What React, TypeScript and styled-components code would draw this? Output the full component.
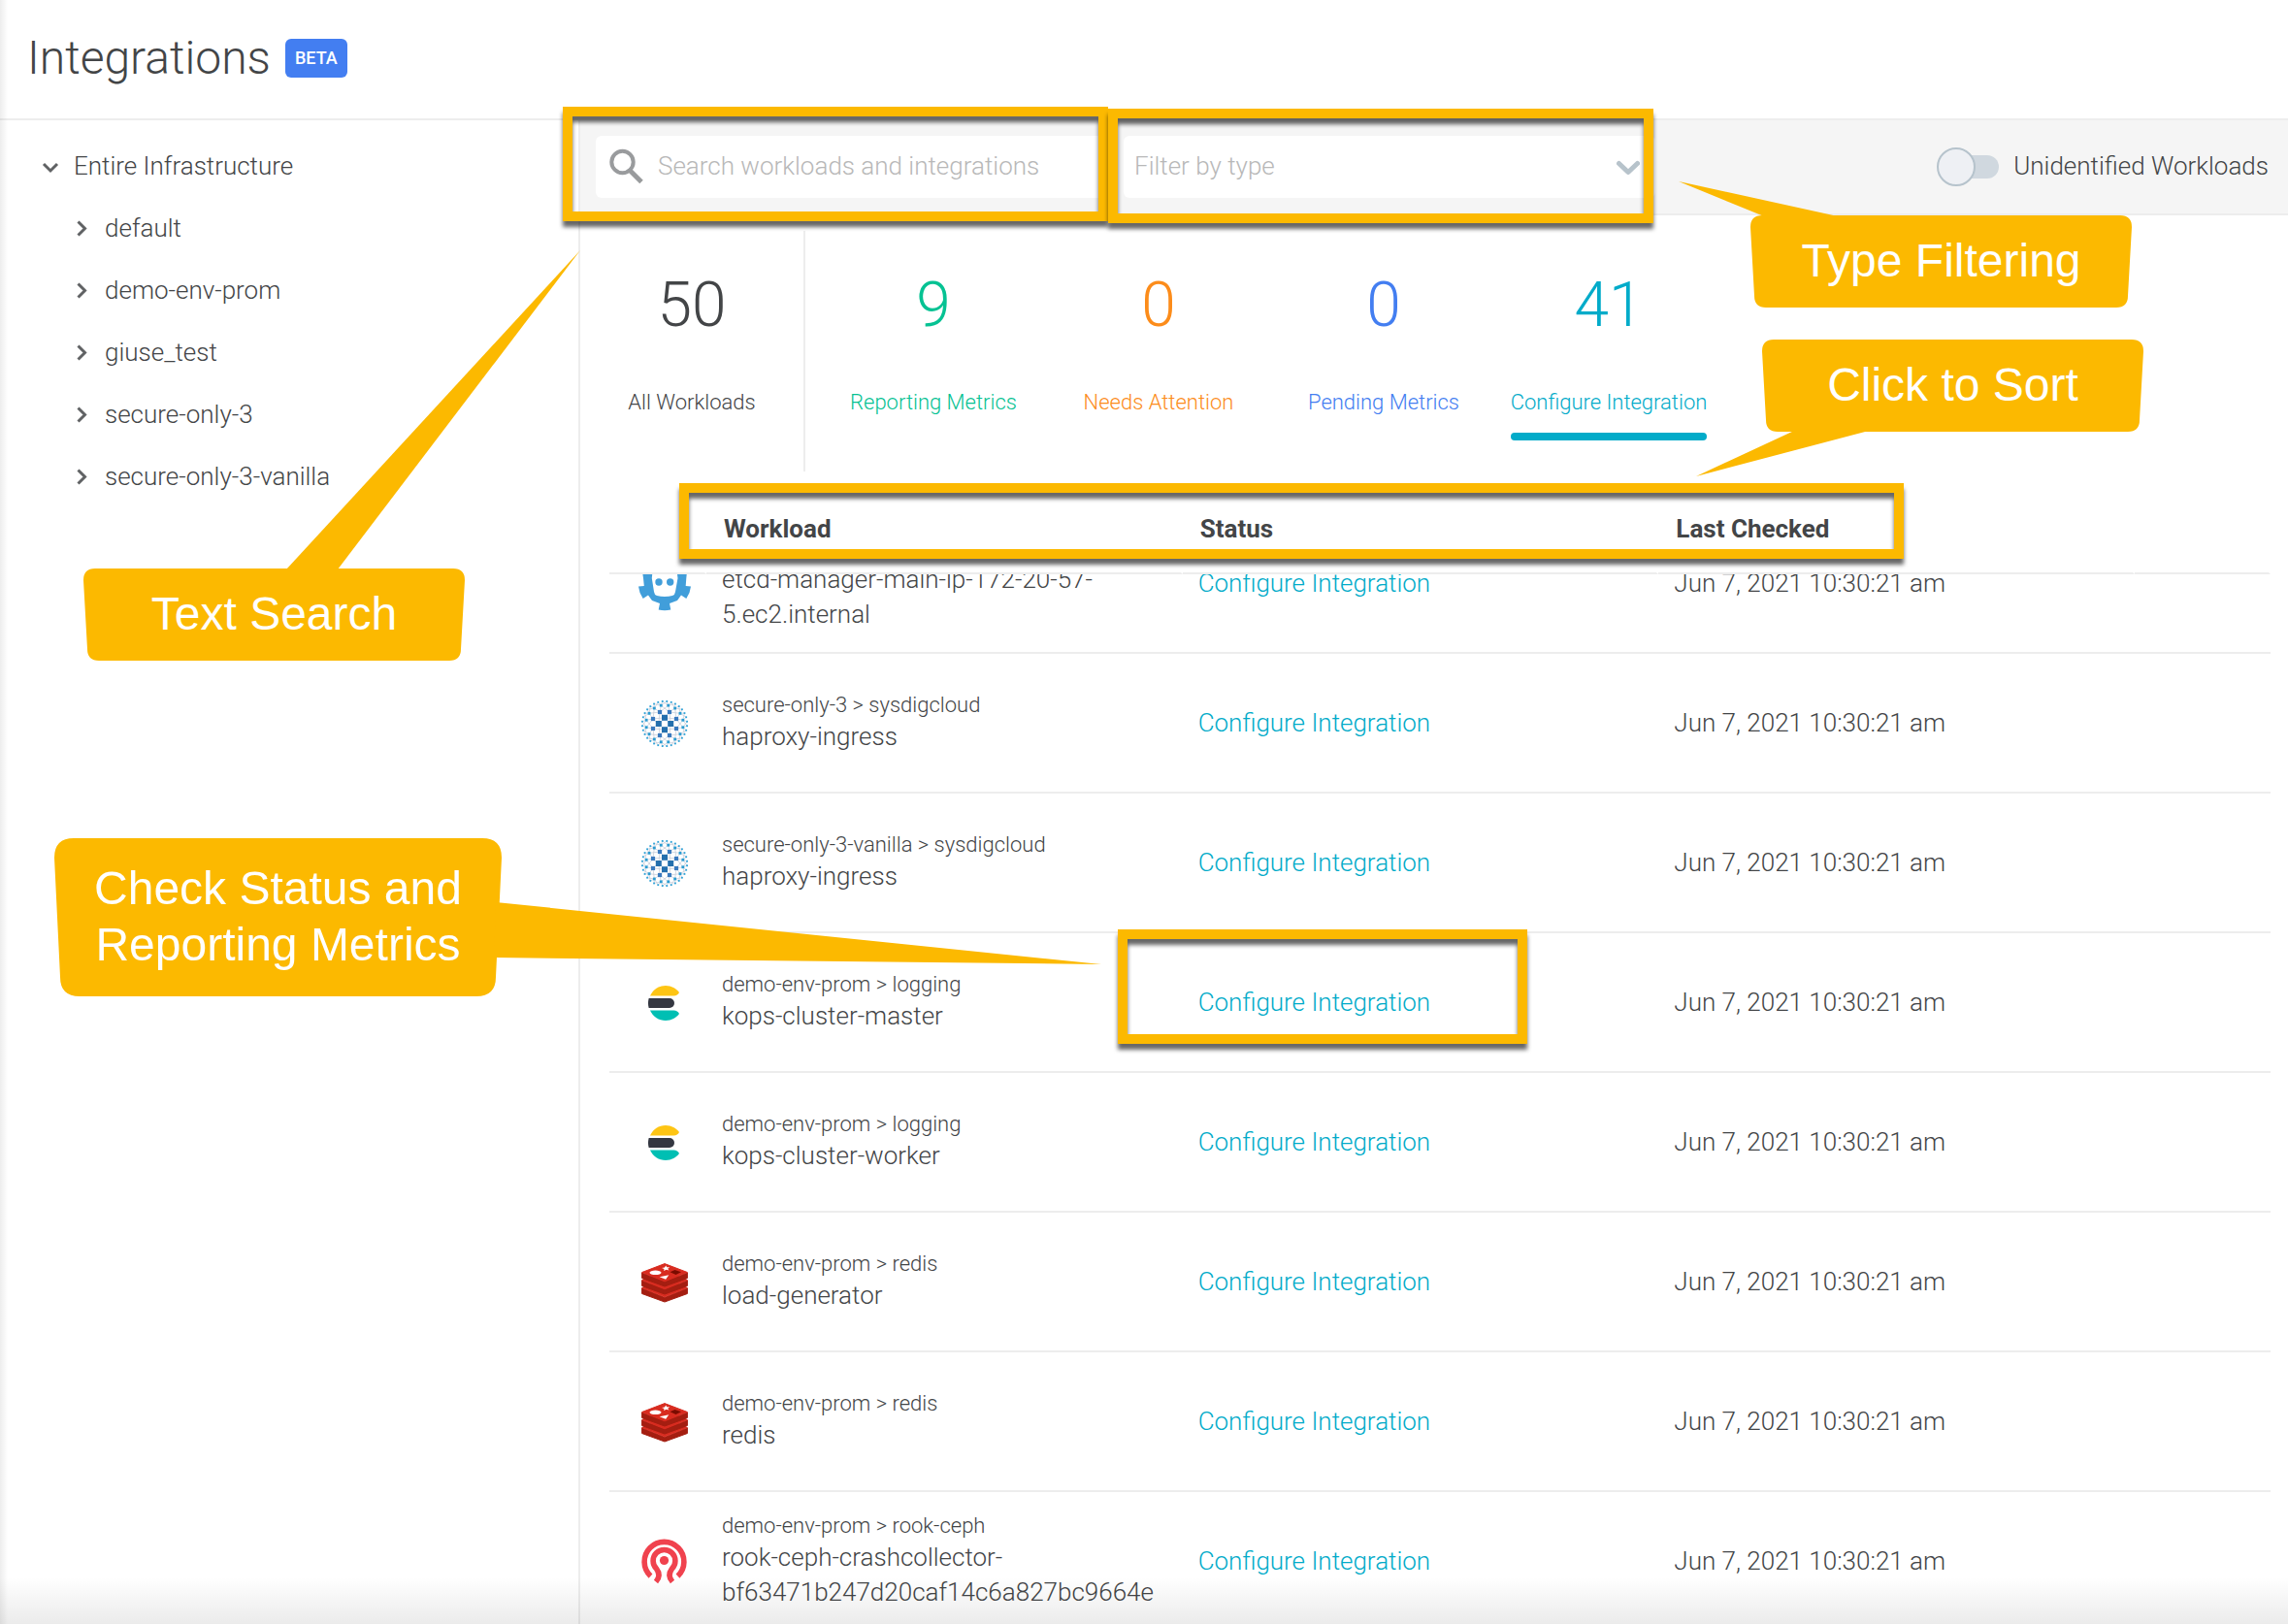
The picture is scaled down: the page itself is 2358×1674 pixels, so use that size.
import React, { useId, useLayoutEffect, useRef, useState } from "react";
import styled, { createGlobalStyle } from "styled-components";

const color = {
  text: "#434547",
  line: "#ededed",
  bar: "#f5f5f5",
  placeholder: "#b8b8b8",
  teal: "#02abc9",
  green: "#06c293",
  orange: "#fc8c1a",
  blue: "#437ef1",
  note: "#fcb900",
};

const GlobalStyle = createGlobalStyle`
  *, *::before, *::after { box-sizing: border-box; }
  body {
    margin: 0;
    background: #fff;
    color: ${color.text};
    font-family: Roboto, "Liberation Sans", sans-serif;
    font-size: 26px;
    font-weight: 300;
    line-height: 36px;
  }
  button, input, select { font: inherit; color: inherit; }
  button { border: 0; padding: 0; background: none; cursor: pointer; }
`;

const Page = styled.div`
  position: relative;
  display: flex;
  flex-direction: column;
  height: 100vh;
  overflow: hidden;
`;

const Header = styled.header`
  display: flex;
  align-items: center;
  gap: 15px;
  padding: 27px 28px 29px;
  border-bottom: 2px solid ${color.line};
`;

const Title = styled.h1`
  margin: 0;
  font-size: 48px;
  line-height: 66px;
  font-weight: 300;
`;

const Badge = styled.span`
  padding: 0 10px;
  border-radius: 6px;
  background: ${color.blue};
  color: #fff;
  font-size: 18px;
  line-height: 40px;
  font-weight: 500;
`;

const Body = styled.div`
  flex: 1;
  min-height: 0;
  display: flex;
`;

const Sidebar = styled.nav`
  flex: 0 0 598px;
  padding: 15px 0 0 36px;
  border-right: 2px solid ${color.line};
`;

const TreeList = styled.ul<{ $nested?: boolean }>`
  list-style: none;
  margin: 0;
  padding: 0 0 0 ${(p) => (p.$nested ? 32 : 0)}px;
`;

const TreeButton = styled.button`
  display: flex;
  align-items: center;
  gap: 8px;
  height: 64px;
`;

const Main = styled.main`
  flex: 1;
  min-width: 0;
  display: flex;
  flex-direction: column;
`;

const Toolbar = styled.div`
  display: flex;
  align-items: center;
  gap: 16px;
  padding: 16px 20px 16px 16px;
  background: ${color.bar};
  border-bottom: 2px solid ${color.line};
`;

const Field = styled.div<{ $width: number }>`
  flex: 0 1 ${(p) => p.$width}px;
  display: flex;
  align-items: center;
  height: 64px;
  padding: 0 16px 0 11px;
  gap: 12px;
  border-radius: 6px;
  background: #fff;
`;

const SearchInput = styled.input`
  flex: 1;
  min-width: 0;
  border: 0;
  padding: 0 0 2px 3px;
  outline: 0;
  background: none;
  &::placeholder { color: ${color.placeholder}; opacity: 1; }
`;

const TypeSelect = styled.select`
  flex: 1;
  min-width: 0;
  border: 0;
  padding: 0 0 2px;
  outline: 0;
  appearance: none;
  background: none;
  color: ${color.placeholder};
`;

const ToggleLabel = styled.label`
  display: flex;
  align-items: center;
  gap: 15px;
  margin-left: auto;
`;

const ToggleText = styled.span`
  padding-bottom: 2px;
`;

const Toggle = styled.input`
  appearance: none;
  display: grid;
  align-items: center;
  margin: 0;
  width: 64px;
  height: 40px;
  &::before, &::after { content: ""; grid-area: 1 / 1; }
  &::before {
    margin-left: 8px;
    height: 24px;
    border-radius: 12px;
    background: #d0d8df;
  }
  &::after {
    width: 40px;
    height: 40px;
    border: 2px solid #b6c3cc;
    border-radius: 50%;
    background: #eef0f4;
  }
  &:checked::after { margin-left: 24px; }
`;

const Stats = styled.div`
  display: flex;
  padding: 16px 0 14px;
`;

const StatButton = styled.button<{ $tone: string; $divided?: boolean }>`
  display: flex;
  flex-direction: column;
  align-items: center;
  width: 232px;
  height: 248px;
  padding-top: 37px;
  color: ${(p) => p.$tone};
  ${(p) => p.$divided && `border-right: 2px solid ${color.line}; margin-right: 16px;`}
`;

const StatNumber = styled.span`
  margin-bottom: 44px;
  font-size: 64px;
  line-height: 80px;
`;

const StatLabel = styled.span<{ $active: boolean }>`
  font-size: 22px;
  line-height: 32px;
  &::after {
    content: "";
    display: block;
    height: 8px;
    margin-top: 15px;
    border-radius: 4px;
    background: ${(p) => (p.$active ? "currentColor" : "transparent")};
  }
`;

const Scroller = styled.div`
  flex: 1;
  min-height: 0;
  margin: 0 18px 0 30px;
  overflow-y: auto;
  scrollbar-width: none;
`;

const Table = styled.table`
  width: 100%;
  table-layout: fixed;
  border-collapse: separate;
  border-spacing: 0;
`;

const HeadCell = styled.th<{ $width?: number }>`
  position: sticky;
  top: 0;
  z-index: 1;
  width: ${(p) => (p.$width ? `${p.$width}px` : "auto")};
  height: 92px;
  padding: 0 18px;
  background: #fff;
  border-right: 2px solid #fff;
  border-bottom: 2px solid ${color.line};
  text-align: left;
`;

const SortButton = styled.button`
  font-weight: 700;
`;

const Cell = styled.td`
  height: 144px;
  padding: 0 16px;
  border-bottom: 2px solid ${color.line};
  vertical-align: middle;
`;

const IconCell = styled(Cell)`
  padding: 2px 0 0 13px;
  text-align: center;
  svg { display: block; margin: 0 auto; }
`;

const Scope = styled.div`
  min-height: 28px;
  font-size: 22px;
  line-height: 28px;
`;

const ConfigureLink = styled.a`
  color: ${color.teal};
  text-decoration: none;
`;

const EdgeShade = styled.div<{ $side: "left" | "bottom" }>`
  position: absolute;
  left: 0;
  bottom: 0;
  pointer-events: none;
  ${(p) =>
    p.$side === "left"
      ? "top: 0; width: 8px; background: linear-gradient(to right, rgba(0,0,0,.07), transparent);"
      : "right: 0; height: 48px; background: linear-gradient(to top, rgba(0,0,0,.08), transparent);"}
`;

/* Annotation layer */

const Frame = styled.div<{ $x: number; $y: number; $w: number; $h: number }>`
  position: absolute;
  z-index: 2;
  left: ${(p) => p.$x}px;
  top: ${(p) => p.$y}px;
  width: ${(p) => p.$w}px;
  height: ${(p) => p.$h}px;
  border: 10px solid ${color.note};
  filter: drop-shadow(0 6px 2px rgba(0, 0, 0, 0.6));
  pointer-events: none;
`;

const Bubble = styled.div<{ $x: number; $y: number; $w: number; $h: number }>`
  position: absolute;
  z-index: 2;
  left: ${(p) => p.$x}px;
  top: ${(p) => p.$y}px;
  width: ${(p) => p.$w}px;
  height: ${(p) => p.$h}px;
  display: grid;
  place-items: center;
  pointer-events: none;
  svg { position: absolute; inset: 0; overflow: visible; fill: ${color.note}; }
`;

const BubbleText = styled.p`
  position: relative;
  margin: 0;
  padding-bottom: 2px;
  color: #fff;
  font-family: "Liberation Sans", Arial, sans-serif;
  font-size: 48px;
  font-weight: 400;
  line-height: 58px;
  text-align: center;
  white-space: pre-line;
`;

type CalloutProps = { x: number; y: number; w: number; h: number; r: number; tail: string; text: string };

function Callout({ x, y, w, h, r, tail, text }: CalloutProps) {
  // inset of the bottom corners, which gives the sides their slant
  const s = h > 120 ? 6 : 4;
  const body =
    `M${r} 0H${w - r}Q${w} 0 ${w} ${r}L${w - s} ${h - r}Q${w - s} ${h} ${w - s - r} ${h}` +
    `H${s + r}Q${s} ${h} ${s} ${h - r}L0 ${r}Q0 0 ${r} 0Z`;
  return (
    <Bubble $x={x} $y={y} $w={w} $h={h}>
      <svg width={w} height={h} aria-hidden="true">
        <path d={body} />
        <polygon points={tail} />
      </svg>
      <BubbleText>{text}</BubbleText>
    </Bubble>
  );
}

/* Icons */

function Chevron({ open }: { open?: boolean }) {
  return (
    <svg width="32" height="32" viewBox="0 0 32 32" fill="none" stroke="#606264" strokeWidth="3" aria-hidden="true">
      <path d={open ? "M9 14l7 7 7-7" : "M12.500 9.500l7 7-7 7"} />
    </svg>
  );
}

function SelectChevron() {
  return (
    <svg width="32" height="32" viewBox="0 0 32 32" fill="none" stroke="#b7c3cb" strokeWidth="5" strokeLinecap="round" strokeLinejoin="round" aria-hidden="true">
      <path d="M10.500 12.500l9.500 9 9.500-9" />
    </svg>
  );
}

function SearchIcon() {
  return (
    <svg width="38" height="38" viewBox="0 0 38 38" fill="none" stroke="#999b9d" aria-hidden="true">
      <circle cx="16.500" cy="14" r="11.200" strokeWidth="4" />
      <path d="M24.500 23L36 34.500" strokeWidth="5" />
    </svg>
  );
}

function EtcdIcon() {
  return (
    <svg width="56" height="60" viewBox="0 0 56 60" aria-hidden="true">
      <path
        fill="#419eda"
        fillRule="evenodd"
        d="M28 2L34 8L43 7L45 13L51 17L50.300 24L49.700 32L55 32.500L53.500 39L50.300 45L45 41.500L41 47L33 50L34.300 56.500Q28 57.800 21.700 56.500L23 50L15 47L11 41.500L5.700 45L2.500 39L1 32.500L6.800 32L6 24L5 17L11 13L13 7L22 8ZM17 15Q14.500 19 14.800 24L17 38Q17.300 41 20 42Q28 44 36 42Q38.700 41 39 38L41.500 24Q41.800 19 39 15Z"
      />
      <circle cx="22" cy="28" r="3.700" fill="#419eda" />
      <circle cx="33.700" cy="28" r="3.700" fill="#419eda" />
    </svg>
  );
}

const rings = [
  { count: 4, radius: 6.2, size: 6, offset: 0, fill: "#246fad" },
  { count: 8, radius: 13, size: 4.2, offset: 22.5, fill: "#3a7abf" },
  { count: 16, radius: 19.2, size: 2.8, offset: 11.25, fill: "#2a9cd2" },
  { count: 32, radius: 23.2, size: 1.8, offset: 5.625, fill: "#2ea3d8" },
].map((ring) => ({
  ...ring,
  points: Array.from({ length: ring.count }, (_, i) => {
    const a = ((ring.offset + (360 / ring.count) * i) * Math.PI) / 180;
    return { x: 24 + Math.cos(a) * ring.radius, y: 24 + Math.sin(a) * ring.radius };
  }),
}));

const ringLinks = rings.slice(0, -1).flatMap((ring, i) =>
  ring.points.flatMap((p) =>
    [...rings[i + 1].points]
      .sort((a, b) => Math.hypot(a.x - p.x, a.y - p.y) - Math.hypot(b.x - p.x, b.y - p.y))
      .slice(0, 4)
      .map((q) => `M${p.x} ${p.y}L${q.x} ${q.y}`)
  )
);

function HaproxyIcon() {
  return (
    <svg width="48" height="48" viewBox="0 0 48 48" aria-hidden="true">
      <path d={ringLinks.join("")} stroke="#c3c9d6" strokeWidth="0.7" fill="none" />
      {rings.map((ring) =>
        ring.points.map((p, i) => (
          <rect key={`${ring.count}-${i}`} x={p.x - ring.size / 2} y={p.y - ring.size / 2} width={ring.size} height={ring.size} fill={ring.fill} />
        ))
      )}
    </svg>
  );
}

function ElasticIcon() {
  return (
    <svg width="34" height="36" viewBox="0 0 34 36" aria-hidden="true">
      <path fill="#fec514" d="M2 10.500C5 4 11 0 18 0c6 0 11 3 14 7-1 2-3 3.500-5.500 3.500z" />
      <path fill="#343741" d="M.700 13H22a5 5 0 0 1 0 10H.700a18 18 0 0 1 0-10z" />
      <path fill="#00bfb3" d="M2 25.500C5 32 11 36 18 36c6 0 11-3 14-7-1-2-3-3.500-5.500-3.500z" />
    </svg>
  );
}

function RedisIcon() {
  return (
    <svg width="48" height="41" viewBox="0 0 48 41" strokeLinejoin="round" aria-hidden="true">
      {[16, 8, 0].map((dy) => (
        <g key={dy} transform={`translate(0 ${dy})`}>
          <path fill="#a41e11" stroke="#a41e11" d="M.600 10v5.500L24 24l23.400-8.500V10L24 19.500z" />
          <path fill="#d82c20" stroke="#d82c20" d="M24 .600L47.400 9.500 24 18.800.600 9.500z" />
        </g>
      ))}
      <ellipse cx="14.500" cy="9.800" rx="6" ry="2.300" fill="#fff" />
      <path fill="#fff" d="M25.200 2.600l1 1.700 3-.100-2 1.500 1.300 1.800-2.900-.700-2.500 1.100.400-1.800-2.500-1.100 3-.400z" />
      <path fill="#fff" d="M18.700 14.300l9.600-2-3.200 4.400z" />
      <path fill="#7a0c00" d="M29.500 9.300l5-2.300 6.500 2.200-5.500 2.700z" />
    </svg>
  );
}

function CephIcon() {
  return (
    <svg width="48" height="50" viewBox="0 0 48 50" fill="none" stroke="#f0424e" strokeWidth="5.600" aria-hidden="true">
      <circle cx="23.500" cy="23.500" r="4.600" fill="#f0424e" stroke="none" />
      <path d="M9.500 39.600A20.400 20.400 0 1 1 37.500 39.600" />
      <path d="M15 45.500c4-4.500 3.500-9.500.500-13.500A11.400 11.400 0 1 1 31.500 32c-3 4-3.500 9 .500 13.500" />
    </svg>
  );
}

/* Data */

const clusters = ["default", "demo-env-prom", "giuse_test", "secure-only-3", "secure-only-3-vanilla"];

const stats = [
  { value: 50, label: "All Workloads", tone: color.text },
  { value: 9, label: "Reporting Metrics", tone: color.green },
  { value: 0, label: "Needs Attention", tone: color.orange },
  { value: 0, label: "Pending Metrics", tone: color.blue },
  { value: 41, label: "Configure Integration", tone: color.teal },
];

const workloads = [
  { Icon: EtcdIcon, scope: "", name: "etcd-manager-main-ip-172-20-57-5.ec2.internal" },
  { Icon: HaproxyIcon, scope: "secure-only-3 > sysdigcloud", name: "haproxy-ingress" },
  { Icon: HaproxyIcon, scope: "secure-only-3-vanilla > sysdigcloud", name: "haproxy-ingress" },
  { Icon: ElasticIcon, scope: "demo-env-prom > logging", name: "kops-cluster-master" },
  { Icon: ElasticIcon, scope: "demo-env-prom > logging", name: "kops-cluster-worker" },
  { Icon: RedisIcon, scope: "demo-env-prom > redis", name: "load-generator" },
  { Icon: RedisIcon, scope: "demo-env-prom > redis", name: "redis" },
  { Icon: CephIcon, scope: "demo-env-prom > rook-ceph", name: "rook-ceph-crashcollector-bf63471b247d20caf14c6a827bc9664e" },
];

const LIST_SCROLL = 62;

export default function App() {
  const toggleId = useId();
  const scroller = useRef<HTMLDivElement>(null);
  const [active, setActive] = useState("Configure Integration");

  useLayoutEffect(() => {
    if (scroller.current) scroller.current.scrollTop = LIST_SCROLL;
  }, []);

  return (
    <Page>
      <GlobalStyle />
      <Header>
        <Title>Integrations</Title>
        <Badge>BETA</Badge>
      </Header>
      <Body>
        <Sidebar aria-label="Infrastructure">
          <TreeList>
            <li>
              <TreeButton type="button" aria-expanded="true">
                <Chevron open />
                Entire Infrastructure
              </TreeButton>
              <TreeList $nested>
                {clusters.map((name) => (
                  <li key={name}>
                    <TreeButton type="button" aria-expanded="false">
                      <Chevron />
                      {name}
                    </TreeButton>
                  </li>
                ))}
              </TreeList>
            </li>
          </TreeList>
        </Sidebar>
        <Main>
          <Toolbar>
            <Field $width={528}>
              <SearchIcon />
              <SearchInput type="text" aria-label="Search" placeholder="Search workloads and integrations" />
            </Field>
            <Field $width={548}>
              <TypeSelect aria-label="Type" defaultValue="">
                <option value="">Filter by type</option>
              </TypeSelect>
              <SelectChevron />
            </Field>
            <ToggleLabel htmlFor={toggleId}>
              <Toggle id={toggleId} type="checkbox" />
              <ToggleText>Unidentified Workloads</ToggleText>
            </ToggleLabel>
          </Toolbar>
          <Stats>
            {stats.map((s, i) => (
              <StatButton key={s.label} type="button" $tone={s.tone} $divided={i === 0} onClick={() => setActive(s.label)}>
                <StatNumber>{s.value}</StatNumber>
                <StatLabel $active={active === s.label}>{s.label}</StatLabel>
              </StatButton>
            ))}
          </Stats>
          <Scroller ref={scroller}>
            <Table>
              <thead>
                <tr>
                  <HeadCell $width={100} />
                  <HeadCell><SortButton type="button">Workload</SortButton></HeadCell>
                  <HeadCell><SortButton type="button">Status</SortButton></HeadCell>
                  <HeadCell><SortButton type="button">Last Checked</SortButton></HeadCell>
                  <HeadCell $width={140} />
                </tr>
              </thead>
              <tbody>
                {workloads.map(({ Icon, scope, name }, i) => (
                  <tr key={i}>
                    <IconCell><Icon /></IconCell>
                    <Cell>
                      <Scope>{scope}</Scope>
                      {name}
                    </Cell>
                    <Cell><ConfigureLink href="#configure">Configure Integration</ConfigureLink></Cell>
                    <Cell>Jun 7, 2021 10:30:21 am</Cell>
                    <Cell />
                  </tr>
                ))}
              </tbody>
            </Table>
          </Scroller>
        </Main>
      </Body>

      <EdgeShade $side="left" />
      <EdgeShade $side="bottom" />

      <Frame $x={580} $y={110} $w={562} $h={118} />
      <Frame $x={1142} $y={112} $w={562} $h={118} />
      <Frame $x={700} $y={498} $w={1262} $h={78} />
      <Frame $x={1152} $y={958} $w={422} $h={118} />

      <Callout x={86} y={586} w={393} h={95} r={12} tail="209,1 512,-328 262,1" text="Text Search" />
      <Callout x={1804} y={222} w={393} h={95} r={12} tail="14,1 -74,-35 90,1" text="Type Filtering" />
      <Callout x={1816} y={350} w={393} h={95} r={12} tail="33,94 -68,141 110,94" text="Click to Sort" />
      <Callout x={56} y={864} w={461} h={163} r={20} tail="455,66 1079,130 453,123" text={"Check Status and\nReporting Metrics"} />
    </Page>
  );
}
